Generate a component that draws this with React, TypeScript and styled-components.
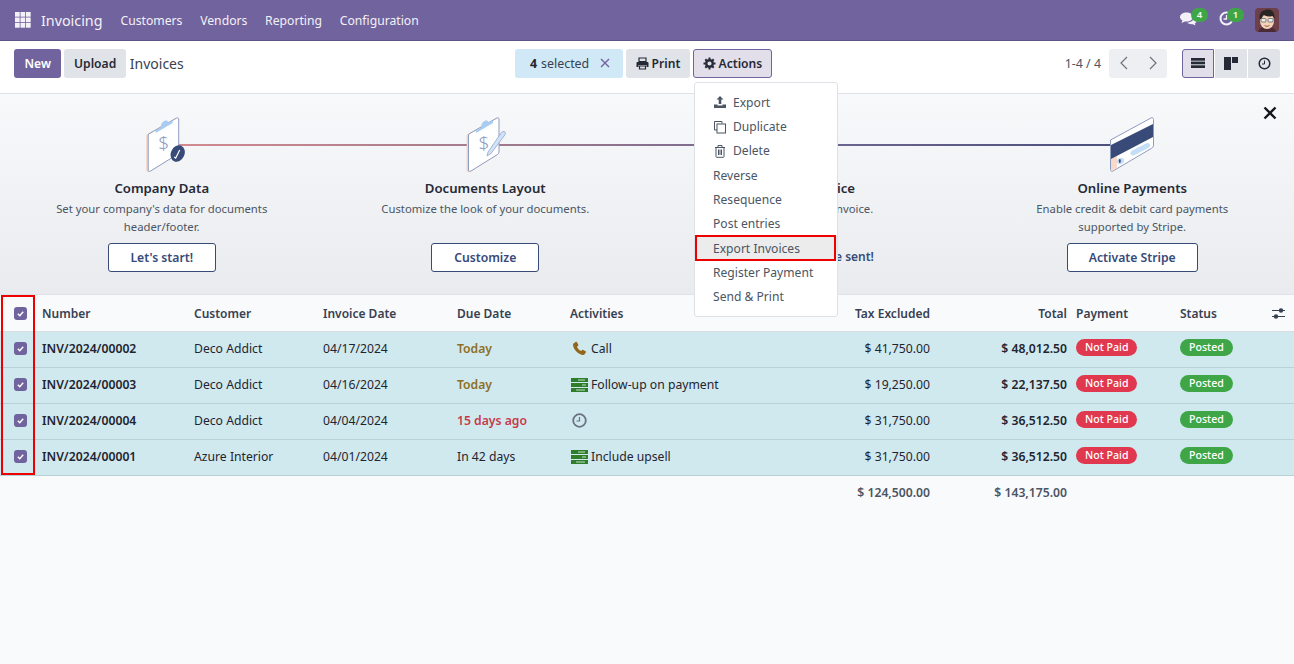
import React from "react";
import styled, { createGlobalStyle } from "styled-components";

const GlobalStyle = createGlobalStyle`
  html, body {
    margin: 0;
    padding: 0;
    height: 100%;
    background: #f9fafb;
  }
  body {
    font-family: "Noto Sans", "Open Sans", sans-serif;
    font-size: 13px;
    color: #212529;
    overflow: hidden;
  }
  * { box-sizing: border-box; }
`;

const Page = styled.div`
  width: 1294px;
  height: 664px;
  position: relative;
  overflow: hidden;
`;

/* navbar */
const NavBar = styled.header`
  height: 41px;
  background: #71639e;
  border-bottom: 1px solid #5f5386;
  display: flex;
  align-items: center;
  padding: 0 15px;
  color: #f3f1f7;
`;
const AppGrid = styled.svg`
  width: 16px;
  height: 16px;
  margin-right: 10px;
`;
const Brand = styled.span`
  font-size: 14.3px;
  margin-right: 18px;
`;
const NavLink = styled.span`
  font-size: 12.2px;
  margin-right: 17.7px;
`;
const NavRight = styled.div`
  margin-left: auto;
  display: flex;
  align-items: center;
`;
const Systray = styled.div`
  position: relative;
  width: 20px;
  height: 20px;
  margin-right: 18px;
`;
const Counter = styled.span<{ $left: number }>`
  position: absolute;
  top: -2px;
  left: ${({ $left }) => $left}px;
  width: 17px;
  height: 14px;
  border-radius: 7px;
  background: #3fa648;
  color: #f4fff4;
  font-size: 9.5px;
  font-weight: 600;
  line-height: 14px;
  text-align: center;
`;
const Avatar = styled.svg`
  width: 24px;
  height: 24px;
  border-radius: 4px;
`;

/* control panel */
const ControlPanel = styled.section`
  height: 53px;
  background: #fff;
  border-bottom: 1px solid #dee2e6;
  display: grid;
  grid-template-columns: 501px 500px 1fr;
  align-items: center;
  padding: 0 14px 8px;
`;
const Left = styled.div`
  display: flex;
  align-items: center;
  gap: 3px;
`;
const Center = styled.div`
  display: flex;
  align-items: center;
  gap: 3px;
`;
const Right = styled.div`
  display: flex;
  align-items: center;
  justify-content: flex-end;
`;
const Button = styled.button<{ $kind?: "primary" | "secondary" | "active" | "info" }>`
  height: 29px;
  border-radius: 3px;
  font-family: inherit;
  font-size: 12.1px;
  font-weight: 600;
  padding: 0 ${({ $kind }) => ($kind === "primary" ? "9.5px" : "8.6px")};
  display: inline-flex;
  align-items: center;
  gap: 3px;
  white-space: nowrap;
  border: 1px solid transparent;
  background: ${({ $kind }) =>
    $kind === "primary" ? "#71639e" : $kind === "active" ? "#e2dfeb" : $kind === "info" ? "#d1e9f6" : "#e0e3e8"};
  border-color: ${({ $kind }) => ($kind === "active" ? "#71639e" : "transparent")};
  color: ${({ $kind }) => ($kind === "primary" ? "#fff" : "#262a36")};
`;
const Title = styled.span`
  font-size: 14px;
  color: #374151;
  margin-left: 1px;
`;
const Selected = styled(Button)`
  width: 108px;
  padding: 0 0 0 14px;
  font-size: 12.4px;
  font-weight: 400;
  gap: 4px;
  color: #374151;
  b { font-weight: 700; color: #212529; }
`;
const Clear = styled.span`
  margin-left: 7px;
  display: inline-flex;
`;
const Pager = styled.span`
  font-size: 12.4px;
  color: #4b5563;
  margin-right: 8px;
  white-space: nowrap;
`;
const PagerGroup = styled.div`
  width: 58px;
  height: 29px;
  border-radius: 3px;
  background: #eeeff2;
  display: flex;
  align-items: center;
  justify-content: space-around;
  margin-right: 15px;
`;
const ViewSwitch = styled.div`
  display: flex;
  gap: 1px;
`;
const ViewButton = styled.button<{ $active?: boolean; $pos: "first" | "mid" | "last" }>`
  width: 32px;
  height: 29px;
  padding: 0;
  display: flex;
  align-items: center;
  justify-content: center;
  background: ${({ $active }) => ($active ? "#e2dfeb" : "#e0e3e8")};
  border: 1px solid ${({ $active }) => ($active ? "#71639e" : "transparent")};
  border-radius: ${({ $pos }) => ($pos === "first" ? "3px 0 0 3px" : $pos === "last" ? "0 3px 3px 0" : "0")};
`;

/* onboarding banner */
const Banner = styled.section`
  height: 201px;
  background: linear-gradient(180deg, #f8f9fb 0%, #e9ebee 100%);
  border-bottom: 1px solid #dee2e6;
  display: grid;
  grid-template-columns: repeat(4, 323.5px);
  position: relative;
`;
const Dismiss = styled.svg`
  position: absolute;
  top: 12px;
  right: 17px;
  width: 14px;
  height: 14px;
`;
const Step = styled.div`
  position: relative;
  display: flex;
  flex-direction: column;
  align-items: center;
  padding-top: 22px;
  text-align: center;
`;
const Connector = styled.div<{ $from: string; $to: string }>`
  position: absolute;
  top: 50px;
  left: 50%;
  width: 100%;
  height: 2px;
  background: linear-gradient(90deg, ${({ $from }) => $from}, ${({ $to }) => $to});
`;
const StepIcon = styled.svg`
  width: 48px;
  height: 58px;
  position: relative;
  z-index: 1;
`;
const StepTitle = styled.div`
  margin-top: 4px;
  font-size: 13.2px;
  font-weight: 600;
  color: #262a36;
  line-height: 20px;
`;
const StepText = styled.div`
  font-size: 11.3px;
  line-height: 18px;
  color: #4b5563;
  width: 240px;
  height: 36px;
  margin-top: 2px;
`;
const StepButton = styled.button`
  margin-top: 7px;
  height: 29px;
  min-width: 108px;
  padding: 0 21px;
  background: #fff;
  border: 1px solid #374a78;
  border-radius: 3px;
  font-family: inherit;
  font-size: 12.2px;
  font-weight: 600;
  color: #374a78;
`;
const StepDone = styled.div`
  margin-top: 7px;
  height: 29px;
  font-size: 12px;
  font-weight: 600;
  color: #374a78;
  line-height: 28px;
`;

/* list */
const Sheet = styled.div`
  position: relative;
`;
const Table = styled.table`
  width: 100%;
  border-collapse: collapse;
  table-layout: fixed;
  font-size: 12.2px;
`;
const Th = styled.th<{ $right?: boolean }>`
  height: 36px;
  font-size: 12px;
  font-weight: 600;
  color: #374151;
  text-align: ${({ $right }) => ($right ? "right" : "left")};
  background: #f9fafb;
  padding: 1px ${({ $right }) => ($right ? "9px" : "0")} 0 0;
  border-bottom: 1px solid #d8dfe2;
`;
const StatusHead = styled.span`
  display: flex;
  align-items: center;
  justify-content: space-between;
  padding-right: 9px;
`;
const Row = styled.tr`
  background: #d0e9ee;
`;
const Td = styled.td<{ $right?: boolean; $bold?: boolean; $tone?: "warn" | "late" }>`
  height: 36px;
  padding: 0 ${({ $right }) => ($right ? "9px" : "0")} 1px 0;
  border-bottom: 1px solid #b9d2d8;
  text-align: ${({ $right }) => ($right ? "right" : "left")};
  font-weight: ${({ $bold, $tone }) => ($bold || $tone ? 600 : 400)};
  color: ${({ $tone }) => ($tone === "warn" ? "#8f6f1f" : $tone === "late" ? "#c9394a" : "#1f2430")};
  white-space: nowrap;
`;
const TotalCell = styled.td`
  height: 35px;
  padding: 0 9px 0 0;
  text-align: right;
  font-weight: 600;
  color: #4b5563;
`;
const Check = styled.span`
  display: flex;
  align-items: center;
  justify-content: center;
  width: 13px;
  height: 13px;
  margin-left: 14px;
  border-radius: 3px;
  background: #71639e;
`;
const Activity = styled.span`
  display: flex;
  align-items: center;
  gap: 2px;
`;
const ActivitySlot = styled.span`
  width: 19px;
  display: flex;
  align-items: center;
  justify-content: center;
`;
const Pill = styled.span<{ $tone: "danger" | "success" }>`
  display: inline-block;
  height: 17px;
  line-height: 17px;
  padding: 0 9px;
  margin-bottom: 3px;
  vertical-align: middle;
  border-radius: 9px;
  font-size: 10.6px;
  font-weight: 500;
  color: #fff;
  background: ${({ $tone }) => ($tone === "danger" ? "#e0384f" : "#3fa648")};
`;

/* actions menu and annotations */
const Menu = styled.div`
  position: absolute;
  top: 82px;
  left: 694px;
  width: 144px;
  height: 235px;
  background: #fff;
  border: 1px solid #dee2e6;
  border-radius: 3px;
  padding: 7.2px 0;
  z-index: 5;
`;
const MenuItem = styled.div<{ $hot?: boolean }>`
  position: relative;
  height: 24.3px;
  display: flex;
  align-items: center;
  gap: 6px;
  padding-left: 18px;
  font-size: 12.1px;
  color: #4b5563;
  background: ${({ $hot }) => ($hot ? "#ececec" : "transparent")};
`;
const MenuIcon = styled.svg`
  width: 14px;
  height: 14px;
  flex: none;
`;
const HotFrame = styled.div`
  position: absolute;
  inset: -1px 1px -1px 0;
  border: 2px solid #ee0000;
`;
const ColumnFrame = styled.div`
  position: absolute;
  top: 0;
  left: 1px;
  width: 34px;
  height: 180px;
  border: 2px solid #ee0000;
  z-index: 3;
`;

const CheckIcon = () => (
  <svg width="9" height="9" viewBox="0 0 10 10">
    <path d="M2 5.2 4.2 7.4 8 3" fill="none" stroke="#fff" strokeWidth="1.6" />
  </svg>
);

const ChatIcon = () => (
  <svg width="20" height="20" viewBox="0 1.5 20 20" fill="#f3f1f7">
    <path d="M7.5 4C3.9 4 1 6 1 8.5c0 1.4.9 2.7 2.4 3.5L2.5 14.5 6 12.9c.5.1 1 .1 1.5.1 3.6 0 6.5-2 6.5-4.5S11.1 4 7.5 4z" />
    <path d="M15 7.500c.1.300.1.700.1 1 0 3-3 5.500-7 5.600 1 1 2.700 1.700 4.500 1.700.4 0 .8 0 1.200-.1l2.700 1.300-.7-2c1.200-.7 2-1.800 2-3 0-1.900-1.200-3.600-2.800-4.500z" />
  </svg>
);

const ClockSystray = () => (
  <svg width="20" height="20" viewBox="0 1.5 20 20" fill="none" stroke="#f3f1f7" strokeWidth="2">
    <circle cx="9.5" cy="10" r="6" />
    <path d="M9.5 6.5V10.5H6.5" strokeWidth="1.3" />
  </svg>
);

const ClipboardBase = ({ children, dx = 0 }: { children?: React.ReactNode; dx?: number }) => (
  <g transform={`translate(${dx} 0)`}>
    <path d="M8 18 36 2c1-.5 2 0 2 1v33c0 1-.5 2-1.5 2.500L10 55c-1 .5-2.500.5-2.500-1V19z" transform="translate(-1.5 .5)" fill="#fbd9c9" stroke="#f3c4b3" strokeWidth=".6" />
    <path d="M8 18 36 2c1-.5 2 0 2 1v33c0 1-.5 2-1.5 2.500L10 55c-1 .5-2.500.5-2.500-1V19z" fill="#fff" stroke="#8e9bc0" strokeWidth="1" />
    <path d="M15 14.500 20 11.500c0-3 1.500-5.500 3.500-6.500s3.500-.5 4 1.500L32 4.500v2.500L15 17z" fill="#a9cdf2" />
    <text x="17.5" y="34" fontFamily="Noto Sans, sans-serif" fontWeight="300" fontSize="19" fill="#8e9bc0">$</text>
    {children}
  </g>
);

const CompanyIcon = () => (
  <StepIcon viewBox="0 0 48 58">
    <ClipboardBase dx={2.7}>
      <ellipse cx="37" cy="37.5" rx="6.8" ry="8.5" transform="rotate(25 37 37.5)" fill="#374a78" />
      <path d="M33.5 41l1.500 1 4-8" fill="none" stroke="#fff" strokeWidth="1.2" />
    </ClipboardBase>
  </StepIcon>
);

const LayoutIcon = () => (
  <StepIcon viewBox="0 0 48 58">
    <ClipboardBase>
      <path d="M27 36 40 17c1-1.500 3-2 4-1 .8.800.5 2-.3 3.200L30 37.500l-4 2.500z" fill="#cfe3f8" stroke="#8e9bc0" strokeWidth=".7" />
    </ClipboardBase>
  </StepIcon>
);

const InvoiceIcon = () => (
  <StepIcon viewBox="0 0 48 58">
    <ClipboardBase />
  </StepIcon>
);

const CardIcon = () => (
  <StepIcon viewBox="0 0 48 58">
    <path d="M2.500 24 43 2c1.500-.8 2.500 0 2.500 1.500V29c0 1.500-.5 2.500-2 3.300L5 55c-1.500 1-2.500 0-2.500-1.500z" fill="#fff" stroke="#8e9bc0" strokeWidth="1" />
    <path d="M3 43V53.500c0 1 .8 1.300 1.800 1L9 52V40z" fill="#fbd9c9" />
    <path d="M3 29 45 8V21L3 43z" fill="#374a78" />
    <path d="M25 37 39.500 29.500" fill="none" stroke="#c5def7" strokeWidth="5" strokeLinecap="round" />
    <ellipse cx="12.5" cy="45" rx="3.8" ry="3" transform="rotate(-25 12.5 45)" fill="#c5def7" />
    <ellipse cx="11.8" cy="45" rx="1" ry="2" fill="#374a78" />
  </StepIcon>
);

const ExportIcon = () => (
  <MenuIcon viewBox="0 0 14 14" fill="#4b5563">
    <path d="M7 1 10.5 4.500H8.300V9H5.700V4.500H3.500z" />
    <path d="M1 9.500h3.500V10.500h5V9.500H13V13H1z" />
  </MenuIcon>
);
const DuplicateIcon = () => (
  <MenuIcon viewBox="0 0 14 14" fill="none" stroke="#4b5563" strokeWidth="1">
    <path d="M9 3.500V1.500H1.500V10H4" />
    <rect x="4" y="4" width="8.5" height="9" />
  </MenuIcon>
);
const TrashIcon = () => (
  <MenuIcon viewBox="0 0 14 14" fill="none" stroke="#4b5563" strokeWidth="1">
    <path d="M2 3.500h10M5 3V1.500h4V3M3 3.500V12.500c0 .5.3.8.8.8h6.400c.5 0 .8-.3.8-.8V3.500M5.500 5.500V11M7 5.500V11M8.500 5.500V11" />
  </MenuIcon>
);

const PhoneIcon = () => (
  <svg width="15" height="15" viewBox="0 0 15 15">
    <path d="M1.500 2.500 4 .8c.5-.2.8 0 1 .4L6.300 3.700c.2.4.1.7-.2 1L5 5.800c.6 1.800 2.200 3.600 4 4.300l1.200-1.100c.3-.3.6-.3 1-.1l2.400 1.400c.4.200.5.600.3 1l-1.500 2.300c-.3.4-.6.5-1 .5C6 13.600 1 8 1 3.500c0-.4.2-.8.5-1z" fill="#94661b" />
  </svg>
);
const TodoIcon = () => (
  <svg width="17" height="14" viewBox="0 0 17 14">
    <rect y="0" width="17" height="4" fill="#2e7d2c" />
    <rect y="5" width="17" height="4" fill="#2e7d2c" />
    <rect y="10" width="17" height="4" fill="#2e7d2c" />
    <path d="M7 2h7M11 7h4M5 12h9" stroke="#bfe3c0" strokeWidth="1" />
  </svg>
);
const ClockIcon = () => (
  <svg width="15" height="15" viewBox="0 0 15 15" fill="none" stroke="#6b7280">
    <circle cx="7.5" cy="7.5" r="6.3" strokeWidth="1.8" />
    <path d="M7.5 4V8H4.5" strokeWidth="1.2" />
  </svg>
);
const SlidersIcon = () => (
  <svg width="13" height="11" viewBox="0 0 13 11" fill="#374151">
    <rect y="2" width="13" height="1" />
    <rect y="8" width="13" height="1" />
    <circle cx="9" cy="2.5" r="2.2" />
    <circle cx="4" cy="8.5" r="2.2" />
  </svg>
);

const rows = [
  { number: "INV/2024/00002", customer: "Deco Addict", date: "04/17/2024", due: "Today", tone: "warn", icon: <PhoneIcon />, activity: "Call", tax: "$ 41,750.00", total: "$ 48,012.50" },
  { number: "INV/2024/00003", customer: "Deco Addict", date: "04/16/2024", due: "Today", tone: "warn", icon: <TodoIcon />, activity: "Follow-up on payment", tax: "$ 19,250.00", total: "$ 22,137.50" },
  { number: "INV/2024/00004", customer: "Deco Addict", date: "04/04/2024", due: "15 days ago", tone: "late", icon: <ClockIcon />, activity: "", tax: "$ 31,750.00", total: "$ 36,512.50" },
  { number: "INV/2024/00001", customer: "Azure Interior", date: "04/01/2024", due: "In 42 days", icon: <TodoIcon />, activity: "Include upsell", tax: "$ 31,750.00", total: "$ 36,512.50" },
] as const;

export default function App() {
  return (
    <Page>
      <GlobalStyle />
      <NavBar>
        <AppGrid viewBox="0 0 16 16" fill="#f3f1f7">
          {[0, 5.5, 11].map((y) =>
            [0, 5.5, 11].map((x) => <rect key={`${x}-${y}`} x={x} y={y} width="4.7" height="4.7" />)
          )}
        </AppGrid>
        <Brand>Invoicing</Brand>
        <NavLink>Customers</NavLink>
        <NavLink>Vendors</NavLink>
        <NavLink>Reporting</NavLink>
        <NavLink>Configuration</NavLink>
        <NavRight>
          <Systray>
            <ChatIcon />
            <Counter $left={12}>4</Counter>
          </Systray>
          <Systray>
            <ClockSystray />
            <Counter $left={10}>1</Counter>
          </Systray>
          <Avatar viewBox="0 0 24 24">
            <rect width="24" height="24" fill="#6d3f4b" />
            <path d="M3 24c1-4 4-5 9-5s8 1 9 5z" fill="#4a2a35" />
            <ellipse cx="12" cy="13" rx="7" ry="8" fill="#f3d3b8" />
            <path d="M4.5 11C3.500 4 9 1.500 13 1.500c5 0 7 4 6.500 9.500l-1.500-3c-3 1-7 .5-9-1-1 1-2 2-2.500 4z" fill="#2a2624" />
            <rect x="6" y="10.5" width="5" height="3.5" rx="1" fill="#e8eef0" stroke="#555" strokeWidth=".7" />
            <rect x="13" y="10.5" width="5" height="3.5" rx="1" fill="#e8eef0" stroke="#555" strokeWidth=".7" />
            <path d="M9.5 17.500c1.500 1 3.500 1 5 0" fill="none" stroke="#a5513f" strokeWidth="1" />
          </Avatar>
        </NavRight>
      </NavBar>

      <ControlPanel>
        <Left>
          <Button $kind="primary">New</Button>
          <Button>Upload</Button>
          <Title>Invoices</Title>
        </Left>
        <Center>
          <Selected $kind="info">
            <b>4</b> selected
            <Clear>
              <svg width="10" height="10" viewBox="0 0 10 10">
                <path d="M1 1l8 8M9 1l-8 8" stroke="#71639e" strokeWidth="1.4" />
              </svg>
            </Clear>
          </Selected>
          <Button>
            <svg width="13" height="13" viewBox="0 0 13 13" fill="#262a36">
              <path d="M3 1h7v3.500H3z" fill="none" stroke="#262a36" strokeWidth="1.2" />
              <path d="M1.500 5h10c.5 0 1 .5 1 1v4h-2V8h-8v2H.5V6c0-.5.5-1 1-1z" />
              <path d="M3.500 9h6v3h-6z" fill="none" stroke="#262a36" strokeWidth="1.2" />
            </svg>
            Print
          </Button>
          <Button $kind="active">
            <svg width="13" height="13" viewBox="0 0 13 13">
              <circle cx="6.5" cy="6.5" r="3.3" fill="none" stroke="#262a36" strokeWidth="2.4" />
              <path d="M6.5.5v2M6.5 10.500v2M.5 6.500h2M10.500 6.500h2M2.300 2.300l1.400 1.400M9.300 9.300l1.400 1.400M10.700 2.300 9.300 3.700M3.700 9.300l-1.400 1.400" stroke="#262a36" strokeWidth="2" />
            </svg>
            Actions
          </Button>
        </Center>
        <Right>
          <Pager>1-4 / 4</Pager>
          <PagerGroup>
            <svg width="10" height="14" viewBox="0 0 10 14" fill="none" stroke="#6b7280" strokeWidth="1.2">
              <path d="M8 1 2 7l6 6" />
            </svg>
            <svg width="10" height="14" viewBox="0 0 10 14" fill="none" stroke="#6b7280" strokeWidth="1.2">
              <path d="M2 1l6 6-6 6" />
            </svg>
          </PagerGroup>
          <ViewSwitch>
            <ViewButton $active $pos="first">
              <svg width="14" height="10" viewBox="0 0 14 10" fill="#262a36">
                <rect width="14" height="2.7" />
                <rect y="3.6" width="14" height="2.7" />
                <rect y="7.3" width="14" height="2.7" />
              </svg>
            </ViewButton>
            <ViewButton $pos="mid">
              <svg width="14" height="13" viewBox="0 0 14 13" fill="#262a36">
                <rect width="7" height="13" />
                <rect x="8" width="6" height="6" />
              </svg>
            </ViewButton>
            <ViewButton $pos="last">
              <svg width="13" height="13" viewBox="0 0 13 13" fill="none" stroke="#262a36">
                <circle cx="6.5" cy="6.5" r="5.3" strokeWidth="1.5" />
                <path d="M6.5 3.500V7H4" strokeWidth="1" />
              </svg>
            </ViewButton>
          </ViewSwitch>
        </Right>
      </ControlPanel>

      <Banner>
        <Dismiss viewBox="0 0 14 14">
          <path d="M1.500 1.500l11 11M12.500 1.500l-11 11" stroke="#14161d" strokeWidth="2.4" />
        </Dismiss>
        <Step>
          <Connector $from="#d58a8f" $to="#a37b8c" />
          <CompanyIcon />
          <StepTitle>Company Data</StepTitle>
          <StepText>Set your company's data for documents header/footer.</StepText>
          <StepButton>Let's start!</StepButton>
        </Step>
        <Step>
          <Connector $from="#a37b8c" $to="#6d6690" />
          <LayoutIcon />
          <StepTitle>Documents Layout</StepTitle>
          <StepText>Customize the look of your documents.</StepText>
          <StepButton>Customize</StepButton>
        </Step>
        <Step>
          <Connector $from="#6d6690" $to="#4a4f7a" />
          <InvoiceIcon />
          <StepTitle>Create Invoice</StepTitle>
          <StepText>Create your first invoice.</StepText>
          <StepDone>Your first invoice sent!</StepDone>
        </Step>
        <Step>
          <CardIcon />
          <StepTitle>Online Payments</StepTitle>
          <StepText>Enable credit &amp; debit card payments supported by Stripe.</StepText>
          <StepButton>Activate Stripe</StepButton>
        </Step>
      </Banner>

      <Sheet>
        <Table>
          <colgroup>
            <col width="42" />
            <col width="152" />
            <col width="129" />
            <col width="134" />
            <col width="113" />
            <col width="250" />
            <col width="119" />
            <col width="137" />
            <col width="104" />
            <col width="114" />
          </colgroup>
          <thead>
            <tr>
              <Th><Check><CheckIcon /></Check></Th>
              <Th>Number</Th>
              <Th>Customer</Th>
              <Th>Invoice Date</Th>
              <Th>Due Date</Th>
              <Th>Activities</Th>
              <Th $right>Tax Excluded</Th>
              <Th $right>Total</Th>
              <Th>Payment</Th>
              <Th>
                <StatusHead>Status<SlidersIcon /></StatusHead>
              </Th>
            </tr>
          </thead>
          <tbody>
            {rows.map((r) => (
              <Row key={r.number}>
                <Td><Check><CheckIcon /></Check></Td>
                <Td $bold>{r.number}</Td>
                <Td>{r.customer}</Td>
                <Td>{r.date}</Td>
                <Td $tone={"tone" in r ? r.tone : undefined}>{r.due}</Td>
                <Td>
                  <Activity>
                    <ActivitySlot>{r.icon}</ActivitySlot>
                    {r.activity}
                  </Activity>
                </Td>
                <Td $right>{r.tax}</Td>
                <Td $right $bold>{r.total}</Td>
                <Td><Pill $tone="danger">Not Paid</Pill></Td>
                <Td><Pill $tone="success">Posted</Pill></Td>
              </Row>
            ))}
          </tbody>
          <tfoot>
            <tr>
              <td colSpan={6} />
              <TotalCell>$ 124,500.00</TotalCell>
              <TotalCell>$ 143,175.00</TotalCell>
              <td colSpan={2} />
            </tr>
          </tfoot>
        </Table>
        <ColumnFrame />
      </Sheet>

      <Menu>
        <MenuItem><ExportIcon />Export</MenuItem>
        <MenuItem><DuplicateIcon />Duplicate</MenuItem>
        <MenuItem><TrashIcon />Delete</MenuItem>
        <MenuItem>Reverse</MenuItem>
        <MenuItem>Resequence</MenuItem>
        <MenuItem>Post entries</MenuItem>
        <MenuItem $hot>Export Invoices<HotFrame /></MenuItem>
        <MenuItem>Register Payment</MenuItem>
        <MenuItem>Send &amp; Print</MenuItem>
      </Menu>
    </Page>
  );
}
